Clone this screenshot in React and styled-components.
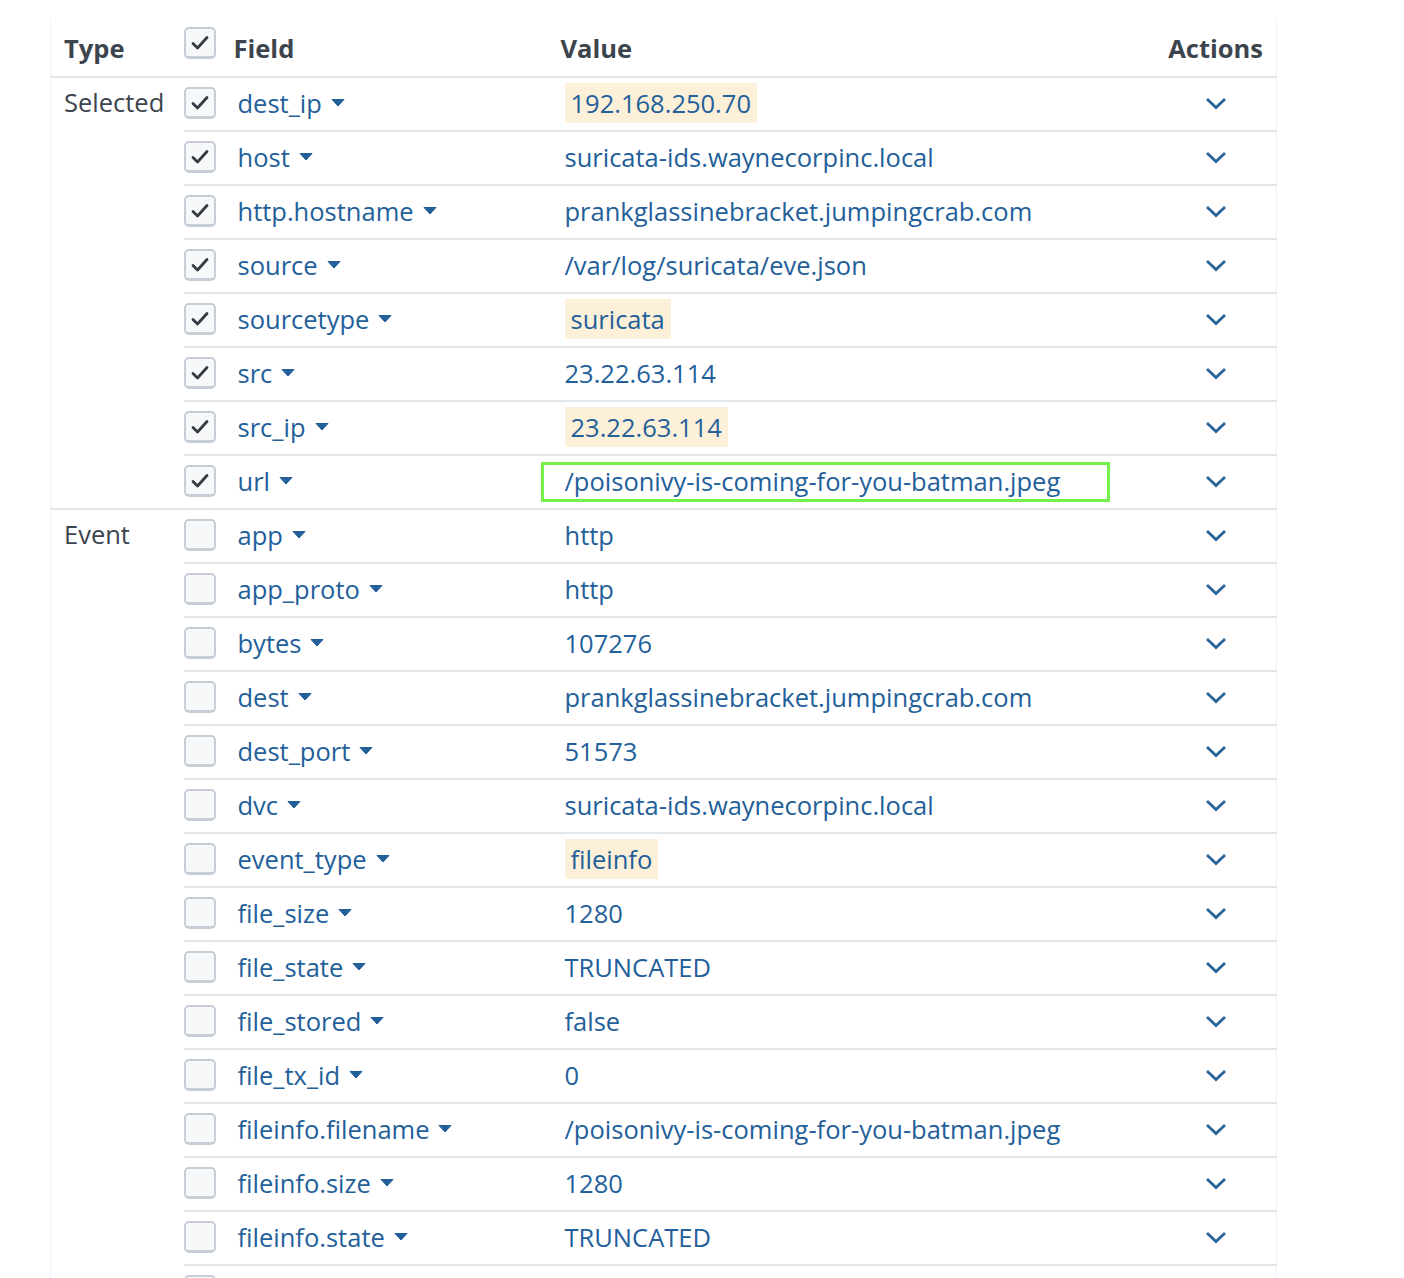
import React from "react";
import styled, { createGlobalStyle } from "styled-components";

const Global = createGlobalStyle`
  html, body { margin: 0; padding: 0; background: #ffffff; overflow: hidden; }
  body { font-family: "Open Sans", "Liberation Sans", sans-serif; }
`;

const Page = styled.div`
  padding: 20px 0 0 50px;
  width: 1226px;
`;

const Table = styled.table`
  width: 1226px;
  table-layout: fixed;
  border-collapse: collapse;
  border-left: 1px solid #f1f2f4;
  border-right: 1px solid #f1f2f4;
  font-size: 25.5px;
`;

const HeadCell = styled.th`
  height: 56px;
  padding: 0 0 0 ${(p) => p.$pl || 8}px;
  text-align: ${(p) => p.$align || "left"};
  vertical-align: middle;
  font-weight: 700;
  color: #3c444d;
  border-bottom: 2px solid #e1e6eb;
  ${(p) => p.$pr && `padding-right: ${p.$pr}px;`}
`;

const HeadCheckCell = styled.th`
  height: 49px;
  padding: 7px 0 0 0;
  vertical-align: top;
  text-align: left;
  border-bottom: 2px solid #e1e6eb;
`;

const TypeCell = styled.td`
  padding: 9px 0 0 13px;
  vertical-align: top;
  color: #3c444d;
  line-height: 30px;
  border-bottom: 2px solid #e1e6eb;
`;

const Cell = styled.td`
  height: 49px;
  padding: 0 0 3px ${(p) => p.$pl ?? 12}px;
  vertical-align: middle;
  text-align: ${(p) => p.$align || "left"};
  border-bottom: 2px solid #e1e6eb;
  color: #23609a;
  white-space: nowrap;
`;

const Box = styled.span`
  display: block;
  width: 32px;
  height: 32px;
  box-sizing: border-box;
  border: 2px solid #c7ced6;
  border-bottom-width: 3px;
  border-radius: 5px;
  background: #f7f8fa;
  position: relative;
  svg { position: absolute; left: 3px; top: 3px; }
`;

const FieldName = styled.span`
  display: inline-flex;
  align-items: center;
  gap: 9px;
`;

const ValueWrap = styled.span`
  position: relative;
  display: inline-block;
  line-height: 40px;
  padding: 0 ${(p) => (p.$hl ? 6 : 0)}px;
  background: ${(p) => (p.$hl ? "#fcf0d9" : "transparent")};
`;

const Annotation = styled.span`
  position: absolute;
  left: -24px;
  top: 1px;
  width: 569px;
  height: 40px;
  box-sizing: border-box;
  border: 3px solid #74f04a;
  pointer-events: none;
`;

const Check = () => (
  <svg width="22" height="22" viewBox="0 0 22 22">
    <polyline points="4,11.5 8.5,16 18,5.5" fill="none" stroke="#343b43" strokeWidth="2.8" strokeLinecap="round" strokeLinejoin="round" />
  </svg>
);

const Checkbox = ({ checked }) => <Box>{checked && <Check />}</Box>;

const Caret = () => (
  <svg width="14" height="9" viewBox="0 0 14 9">
    <path d="M1 1.5 L13 1.5 L7 8 Z" fill="#23609a" stroke="#23609a" strokeWidth="1" strokeLinejoin="round" />
  </svg>
);

const Chevron = () => (
  <svg width="22" height="14" viewBox="0 0 22 14" style={{ display: "block", margin: "0 auto" }}>
    <polyline points="2,3 11,11.5 20,3" fill="none" stroke="#2b6399" strokeWidth="2.8" />
  </svg>
);

const groups = [
  {
    type: "Selected",
    checked: true,
    rows: [
      ["dest_ip", "192.168.250.70", true],
      ["host", "suricata-ids.waynecorpinc.local"],
      ["http.hostname", "prankglassinebracket.jumpingcrab.com"],
      ["source", "/var/log/suricata/eve.json"],
      ["sourcetype", "suricata", true],
      ["src", "23.22.63.114"],
      ["src_ip", "23.22.63.114", true],
      ["url", "/poisonivy-is-coming-for-you-batman.jpeg", false, true],
    ],
  },
  {
    type: "Event",
    checked: false,
    rows: [
      ["app", "http"],
      ["app_proto", "http"],
      ["bytes", "107276"],
      ["dest", "prankglassinebracket.jumpingcrab.com"],
      ["dest_port", "51573"],
      ["dvc", "suricata-ids.waynecorpinc.local"],
      ["event_type", "fileinfo", true],
      ["file_size", "1280"],
      ["file_state", "TRUNCATED"],
      ["file_stored", "false"],
      ["file_tx_id", "0"],
      ["fileinfo.filename", "/poisonivy-is-coming-for-you-batman.jpeg"],
      ["fileinfo.size", "1280"],
      ["fileinfo.state", "TRUNCATED"],
      ["fileinfo.stored", "false"],
    ],
  },
];

export default function App() {
  return (
    <>
      <Global />
      <Page>
        <Table>
          <colgroup>
            <col style={{ width: 133 }} />
            <col style={{ width: 42 }} />
            <col style={{ width: 327 }} />
            <col style={{ width: 604 }} />
            <col style={{ width: 120 }} />
          </colgroup>
          <thead>
            <tr>
              <HeadCell $pl={13}>Type</HeadCell>
              <HeadCheckCell>
                <Checkbox checked />
              </HeadCheckCell>
              <HeadCell>Field</HeadCell>
              <HeadCell>Value</HeadCell>
              <HeadCell $align="right" $pr={13}>Actions</HeadCell>
            </tr>
          </thead>
          <tbody>
            {groups.map((g) =>
              g.rows.map(([field, value, hl, boxed], i) => (
                <tr key={g.type + field}>
                  {i === 0 && <TypeCell rowSpan={g.rows.length}>{g.type}</TypeCell>}
                  <Cell $pl={0}>
                    <Checkbox checked={g.checked} />
                  </Cell>
                  <Cell>
                    <FieldName>
                      {field}
                      <Caret />
                    </FieldName>
                  </Cell>
                  <Cell>
                    <ValueWrap $hl={hl}>
                      {value}
                      {boxed && <Annotation />}
                    </ValueWrap>
                  </Cell>
                  <Cell $pl={0} $align="center">
                    <Chevron />
                  </Cell>
                </tr>
              ))
            )}
          </tbody>
        </Table>
      </Page>
    </>
  );
}
